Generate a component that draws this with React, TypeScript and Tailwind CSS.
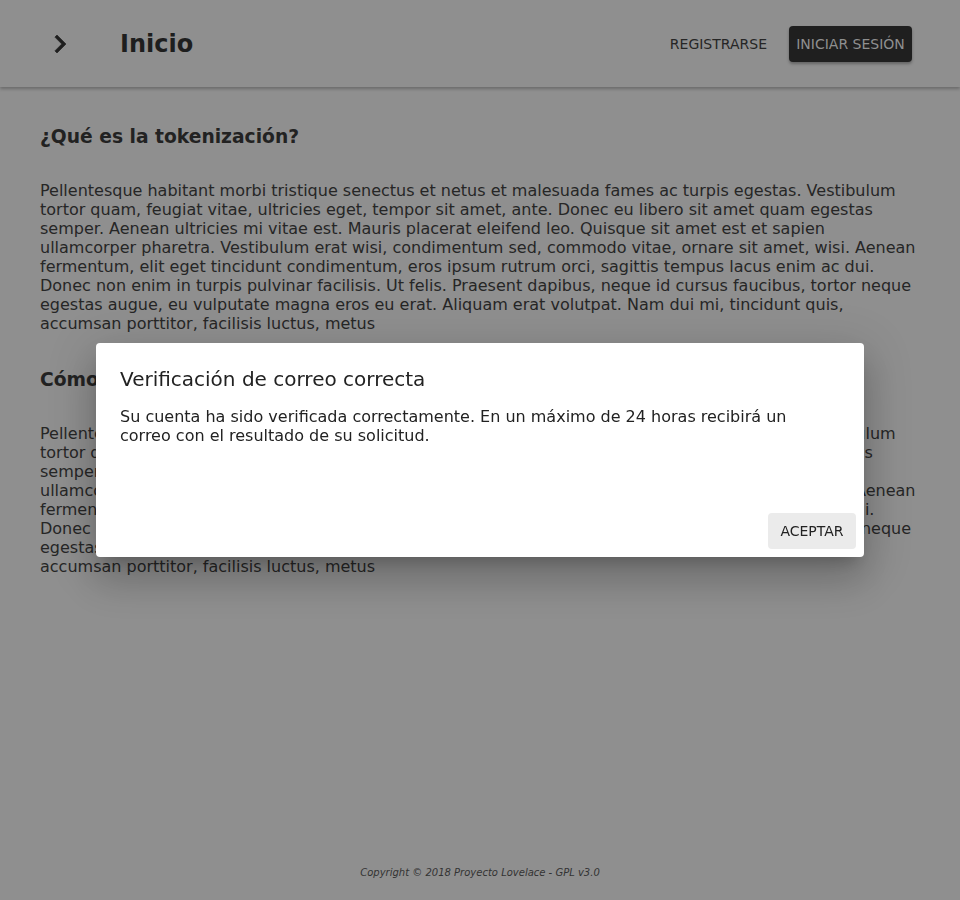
import React from 'react';

const LOREM =
  'Pellentesque habitant morbi tristique senectus et netus et malesuada fames ac turpis egestas. Vestibulum tortor quam, feugiat vitae, ultricies eget, tempor sit amet, ante. Donec eu libero sit amet quam egestas semper. Aenean ultricies mi vitae est. Mauris placerat eleifend leo. Quisque sit amet est et sapien ullamcorper pharetra. Vestibulum erat wisi, condimentum sed, commodo vitae, ornare sit amet, wisi. Aenean fermentum, elit eget tincidunt condimentum, eros ipsum rutrum orci, sagittis tempus lacus enim ac dui. Donec non enim in turpis pulvinar facilisis. Ut felis. Praesent dapibus, neque id cursus faucibus, tortor neque egestas augue, eu vulputate magna eros eu erat. Aliquam erat volutpat. Nam dui mi, tincidunt quis, accumsan porttitor, facilisis luctus, metus';

const sections = [
  { title: '¿Qué es la tokenización?', body: LOREM },
  { title: 'Cómo funciona', body: LOREM },
];

const App: React.FC = () => {
  return (
    <div className="relative min-h-screen flex flex-col bg-[#8f8f8f] text-[#262626] font-['DejaVu_Sans',sans-serif]">
      <header className="h-[87px] flex items-center pl-9 pr-12 bg-[#8f8f8f] shadow-[0_2px_3px_rgba(0,0,0,0.25)]">
        <button className="w-12 h-12 flex items-center justify-center">
          <svg width="36" height="36" viewBox="0 0 24 24" fill="#1f1f1f" stroke="#1f1f1f" strokeWidth="0.4">
            <path d="M10 6L8.59 7.41 13.17 12l-4.58 4.59L10 18l6-6z" />
          </svg>
        </button>
        <h1 className="ml-9 text-[24px] font-bold text-[#1e1e1e]">Inicio</h1>
        <div className="ml-auto flex items-center pt-px">
          <button className="h-9 px-2 text-[14px] text-[#262626] uppercase">Registrarse</button>
          <button className="ml-[14px] h-9 w-[123px] rounded bg-[#1f1f1f] text-[14px] text-[#8f8f8f] uppercase shadow-[0_2px_3px_rgba(0,0,0,0.3)]">
            Iniciar sesión
          </button>
        </div>
      </header>

      <main className="px-10 w-full">
        {sections.map((s, i) => (
          <section key={s.title}>
            <h2 className={`${i === 0 ? 'mt-[39px]' : 'mt-[36px]'} text-[18.7px] leading-[22px] font-bold text-[#222]`}>{s.title}</h2>
            <p className="mt-[33px] text-[16px] leading-[19px]">{s.body}</p>
          </section>
        ))}
      </main>

      <footer className="mt-auto pb-5 text-center text-[10px] leading-[14px] italic text-[#333]">
        Copyright © 2018 Proyecto Lovelace - GPL v3.0
      </footer>

      <div className="fixed inset-0 flex items-center justify-center">
        <div className="w-[768px] h-[214px] flex flex-col bg-white rounded shadow-[0_11px_15px_-7px_rgba(0,0,0,0.2),0_24px_38px_3px_rgba(0,0,0,0.14),0_9px_46px_8px_rgba(0,0,0,0.12)]">
          <h3 className="px-6 pt-6 text-[20px] leading-[24px] text-[#222]">Verificación de correo correcta</h3>
          <p className="px-6 mt-4 text-[16px] leading-[19px] text-[#222]">
            Su cuenta ha sido verificada correctamente. En un máximo de 24 horas recibirá un correo con el resultado de su solicitud.
          </p>
          <div className="mt-auto flex justify-end p-2">
            <button className="h-9 w-[88px] rounded bg-[#ebebeb] text-[14px] text-[#222] uppercase">Aceptar</button>
          </div>
        </div>
      </div>
    </div>
  );
};

export default App;
